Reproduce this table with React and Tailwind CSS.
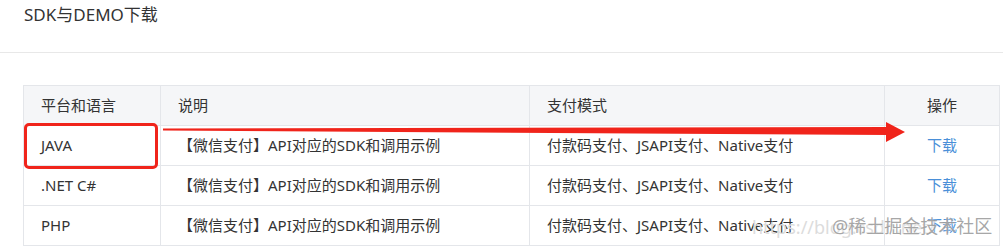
import React from 'react';

const rows = [
  { lang: 'JAVA', desc: '【微信支付】API对应的SDK和调用示例', mode: '付款码支付、JSAPI支付、Native支付' },
  { lang: '.NET C#', desc: '【微信支付】API对应的SDK和调用示例', mode: '付款码支付、JSAPI支付、Native支付' },
  { lang: 'PHP', desc: '【微信支付】API对应的SDK和调用示例', mode: '付款码支付、JSAPI支付、Native支付' },
];

const font = { fontFamily: '"Noto Sans", "Noto Sans CJK SC", sans-serif' };

export default function App() {
  return (
    <div className="relative w-[1003px] h-[252px] bg-white overflow-hidden text-[#333]" style={font}>
      {/* 标题 */}
      <div className="h-[53px] pl-[24px] pt-[2px] text-[17px] leading-[26px] border-b border-[#e8e8e8]">
        SDK与DEMO下载
      </div>

      {/* 表格 */}
      <div className="pl-[23px] pt-[32px]">
        <table className="w-[976px] border-collapse text-[15px] table-fixed">
          <colgroup>
            <col className="w-[137px]" />
            <col className="w-[369px]" />
            <col className="w-[355px]" />
            <col className="w-[115px]" />
          </colgroup>
          <thead>
            <tr className="h-[40px] bg-[#f5f6f8]">
              <th className="border border-[#e4e6ea] pl-[17px] text-left font-normal">平台和语言</th>
              <th className="border border-[#e4e6ea] pl-[17px] text-left font-normal">说明</th>
              <th className="border border-[#e4e6ea] pl-[17px] text-left font-normal">支付模式</th>
              <th className="border border-[#e4e6ea] text-center font-normal">操作</th>
            </tr>
          </thead>
          <tbody>
            {rows.map((r) => (
              <tr key={r.lang} className="h-[40px]">
                <td className="border border-[#e4e6ea] pl-[17px]">{r.lang}</td>
                <td className="border border-[#e4e6ea] pl-[17px]">{r.desc}</td>
                <td className="border border-[#e4e6ea] pl-[17px]">{r.mode}</td>
                <td className="border border-[#e4e6ea] text-center">
                  <a href="#" className="text-[#4a8fd8]">下载</a>
                </td>
              </tr>
            ))}
          </tbody>
        </table>
      </div>

      {/* 标注红框 */}
      <div className="absolute left-[24px] top-[123px] w-[134px] h-[46px] border-[3px] border-[#f0241b] rounded-[5px]" />

      {/* 标注箭头 */}
      <svg className="absolute left-0 top-0" width="1003" height="252">
        <polygon points="163,128.5 888,127 888,135 163,130.5" fill="#f0241b" />
        <polygon points="886,122 905,132 886,142" fill="#f0241b" />
      </svg>

      {/* 水印 */}
      <div className="absolute left-[752px] top-[215px] text-[18px] leading-[24px] text-[#dcdcdc] whitespace-nowrap">
        https://blog.csdn.net/
      </div>
      <div
        className="absolute left-[832px] top-[214px] text-[18px] leading-[24px] text-[#8f8f8f]/80 whitespace-nowrap"
        style={{ textShadow: '0 0 2px #fff' }}
      >
        @稀土掘金技术社区
      </div>
    </div>
  );
}
